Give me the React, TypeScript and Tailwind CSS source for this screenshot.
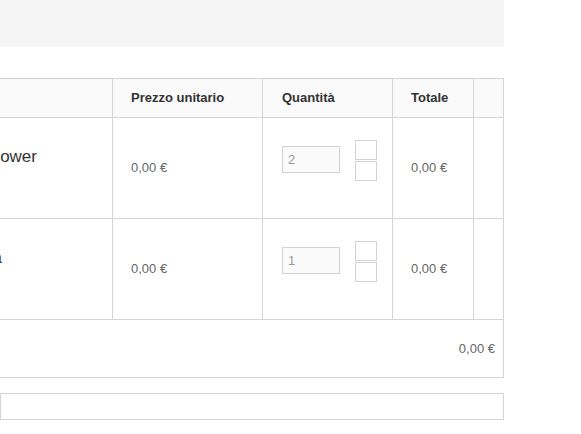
const rows = [
  { name: 'Box doccia Rain Shower', qty: '2', pr: 'pr-[75px]' },
  { name: 'Colonna idromassaggio Sauna', qty: '1', pr: 'pr-[110px]' },
];

function Stepper() {
  return (
    <div className="flex flex-col gap-px">
      <button className="w-[22px] h-[20px] border border-[#d2d2d2] bg-white" />
      <button className="w-[22px] h-[20px] border border-[#d2d2d2] bg-white" />
    </div>
  );
}

export default function App() {
  return (
    <div className="min-h-screen bg-white font-['Liberation_Sans',Arial,sans-serif] overflow-hidden">
      <div className="w-[504px]">
        {/* Top notice band */}
        <div className="h-[47px] bg-[#f5f5f5]" />

        {/* Cart table */}
        <div className="mt-[31px] border-t border-r border-[#d4d4d4]">
          {/* Header */}
          <div className="flex h-[39px] border-b border-[#d4d4d4] bg-[#fafafa] text-[13px] font-bold text-[#333]">
            <div className="w-[112px]" />
            <div className="w-[150px] border-l border-[#d4d4d4] pl-[18px] flex items-center">Prezzo unitario</div>
            <div className="w-[130px] border-l border-[#d4d4d4] pl-[19px] flex items-center">Quantità</div>
            <div className="w-[81px] border-l border-[#d4d4d4] pl-[18px] flex items-center">Totale</div>
            <div className="w-[30px] border-l border-[#d4d4d4]" />
          </div>

          {/* Rows */}
          {rows.map((row, i) => (
            <div key={i} className="flex h-[101px] border-b border-[#d4d4d4] text-[13px] text-[#666]">
              <div className="w-[112px] overflow-hidden">
                <div className={`flex justify-end whitespace-nowrap pt-[27px] text-[17px] leading-6 text-[#333] ${row.pr}`}>
                  {row.name}
                </div>
              </div>
              <div className="w-[150px] border-l border-[#d4d4d4] pl-[18px] flex items-center">0,00 €</div>
              <div className="w-[130px] border-l border-[#d4d4d4] pl-[19px] pt-[22px] flex items-start gap-[15px]">
                <input
                  readOnly
                  value={row.qty}
                  className="mt-[6px] w-[58px] h-[27px] border border-[#d2d2d2] bg-[#fafafa] px-[5px] text-[13px] text-[#999] outline-none"
                />
                <Stepper />
              </div>
              <div className="w-[81px] border-l border-[#d4d4d4] pl-[18px] flex items-center">0,00 €</div>
              <div className="w-[30px] border-l border-[#d4d4d4]" />
            </div>
          ))}

          {/* Footer total */}
          <div className="flex h-[58px] items-center justify-end border-b border-[#d4d4d4] pr-[8px] text-[13px] text-[#666]">
            0,00 €
          </div>
        </div>

        {/* Coupon box */}
        <div className="mt-[15px] h-[27px] border border-[#d4d4d4] bg-white" />
      </div>
    </div>
  );
}
